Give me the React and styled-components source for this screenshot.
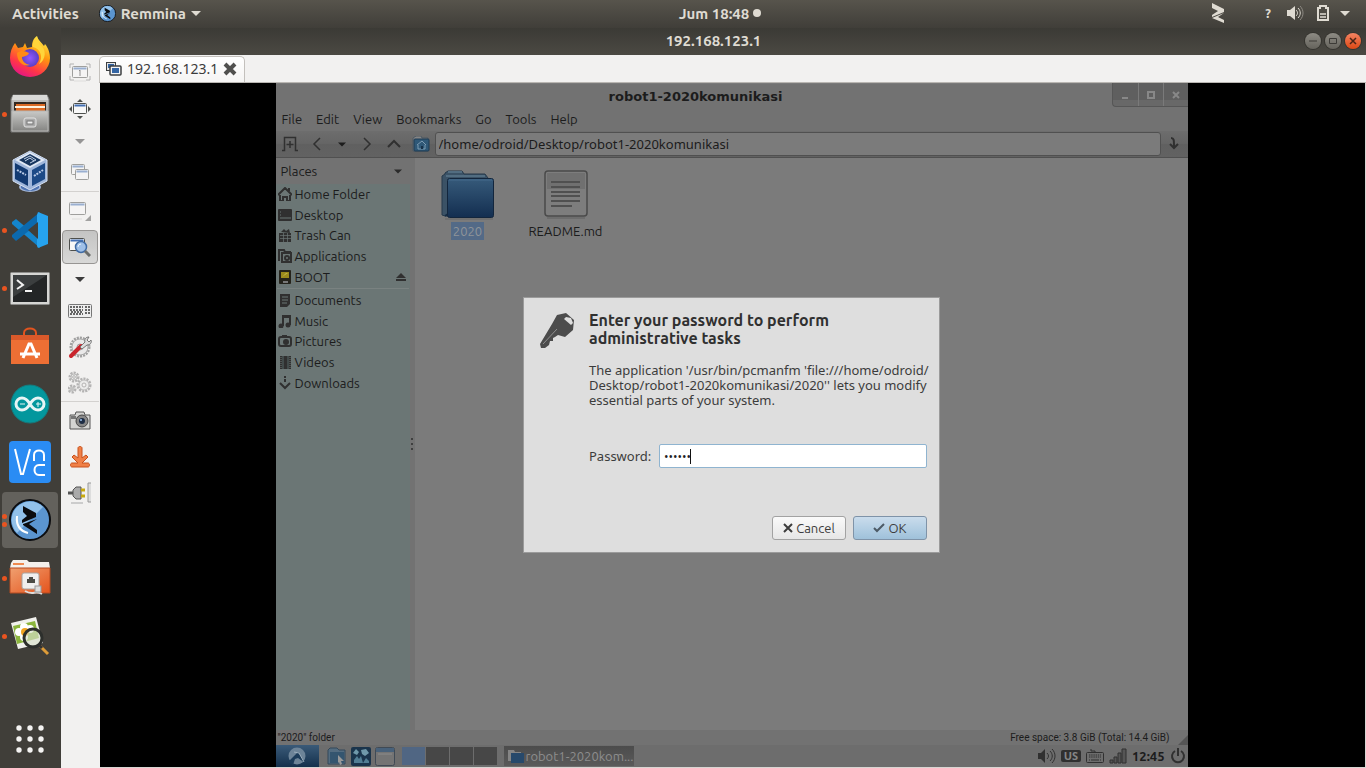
import React from "react";
import styled, { createGlobalStyle } from "styled-components";

const GlobalStyle = createGlobalStyle`
  * { box-sizing: border-box; }
  body { margin: 0; font-family: "Ubuntu", "Open Sans", "Noto Sans", sans-serif; font-size: 13px; overflow: hidden; }
  button, input { font: inherit; color: inherit; }
  button { border: 0; padding: 0; background: none; }
  h1, h2, p, ul { margin: 0; padding: 0; font-weight: inherit; }
  ul { list-style: none; }
  svg { display: block; flex: none; }
`;

const Screen = styled.div`
  display: flex;
  flex-direction: column;
  height: 100vh;
  background: #403e39;
`;

const TopBar = styled.header`
  display: grid;
  grid-template-columns: 1fr auto 1fr;
  align-items: center;
  height: 28px;
  flex: none;
  padding-bottom: 2px;
  color: #dfdbd2;
  font-size: 15px;
  font-weight: 600;
  background: linear-gradient(#57544c, #403e39);
`;
const TopLeft = styled.div`
  display: flex;
  align-items: center;
  padding-left: 12px;
  gap: 20px;
`;
const TopButton = styled.button`
  display: flex;
  align-items: center;
  gap: 5px;
  height: 26px;
`;
const Clock = styled.button`
  display: flex;
  align-items: center;
  gap: 4px;
  padding-left: 74px;
`;
const Tray = styled.div`
  display: flex;
  align-items: center;
  justify-content: flex-end;
  gap: 10px;
  padding-right: 16px;
`;
const TraySlot = styled.span`
  display: flex;
  justify-content: center;
  width: ${(p) => p.$w}px;
  margin-right: ${(p) => (p.$apart ? 24 : 0)}px;
  font-size: 13px;
`;

const Workspace = styled.div`
  display: flex;
  flex: 1;
  min-height: 0;
`;
const Dock = styled.nav`
  display: flex;
  flex-direction: column;
  gap: 2px;
  width: 61px;
  flex: none;
  padding: 0 3px 1px 2px;
  background: #403e39;
`;
const DockItem = styled.button`
  position: relative;
  display: flex;
  align-items: center;
  justify-content: center;
  width: 56px;
  height: 56px;
  flex: none;
  border-radius: 4px;
  background: ${(p) => (p.$active ? "#63615c" : "none")};
  margin-top: ${(p) => (p.$last ? "auto" : 0)};
`;
const Pips = styled.span`
  position: absolute;
  left: 0;
  top: 0;
  bottom: 0;
  display: flex;
  flex-direction: column;
  justify-content: center;
  gap: 3px;
  i { width: 5px; height: 5px; border-radius: 50%; background: #e95420; }
`;

const Window = styled.main`
  display: flex;
  flex-direction: column;
  flex: 1;
  min-width: 0;
  background: #f2f1f0;
`;
const TitleBar = styled.div`
  position: relative;
  display: flex;
  align-items: center;
  justify-content: center;
  height: 27px;
  flex: none;
  padding-bottom: 2px;
  color: #dfdbd2;
  background: linear-gradient(#3b3a35, #4b4943);
  h1 { font-size: 15px; font-weight: 600; }
`;
const WindowButtons = styled.div`
  position: absolute;
  right: 5px;
  top: 5px;
  display: flex;
  gap: 4px;
`;
const RoundButton = styled.button`
  display: grid;
  place-items: center;
  width: 16px;
  height: 16px;
  border-radius: 50%;
  box-shadow: 0 0 0 1px #35342f;
  background: ${(p) => (p.$close ? "linear-gradient(#f58463, #dd4814)" : "linear-gradient(#8d8b84, #65635c)")};
`;
const WindowBody = styled.div`
  display: flex;
  flex: 1;
  min-height: 0;
`;
const ToolColumn = styled.div`
  width: 38px;
  flex: none;
`;
const Tool = styled.button`
  display: grid;
  place-items: center;
  width: 36px;
  height: ${(p) => (p.$short ? 28 : 36)}px;
  margin-left: 1px;
  opacity: ${(p) => (p.$off ? 0.5 : 1)};
`;
const PressedTool = styled(Tool)`
  background: linear-gradient(#c4c4c3, #d8d8d7);
  border: 1px solid #979593;
  border-radius: 4px;
  height: 34px;
  margin: 1px 0 1px 1px;
`;
const ToolRule = styled.hr`
  height: 2px;
  margin: 0;
  border: 0;
  border-top: 1px solid #d3d1cf;
`;
const Pages = styled.div`
  display: flex;
  flex-direction: column;
  flex: 1;
  min-width: 0;
`;
const TabStrip = styled.div`
  display: flex;
  align-items: flex-end;
  height: 28px;
  flex: none;
  border-bottom: 1px solid #b9b6b2;
`;
const Tab = styled.div`
  display: flex;
  align-items: center;
  height: 26px;
  padding: 0 7px 2px 6px;
  border: 1px solid #c3c0bc;
  border-bottom: 0;
  border-radius: 5px 5px 0 0;
  background: linear-gradient(#fff, #f5f4f3);
  color: #3c3c3c;
  font-family: "Noto Sans", sans-serif;
  font-size: 14px;
  gap: 5px;
`;
const Viewport = styled.div`
  display: flex;
  justify-content: center;
  flex: 1;
  min-height: 0;
  margin-left: 1px;
  padding-right: 2px;
  background: #000;
  border: solid #d8d5d2;
  border-width: 0 1px 1px 0;
`;

const Remote = styled.section`
  position: relative;
  display: flex;
  flex-direction: column;
  height: 100%;
  aspect-ratio: 4 / 3;
  background: #727272;
  color: #1c1c1c;
`;
const RemoteTitle = styled.div`
  display: flex;
  align-items: center;
  justify-content: center;
  position: relative;
  height: 27px;
  flex: none;
  padding: 0 72px 2px 0;
  border-top: 1px solid #7a7a7a;
  font: 700 13px "DejaVu Sans", sans-serif;
  h2 { font-size: 13px; }
`;
const RemoteButtons = styled.div`
  position: absolute;
  right: 0;
  top: -1px;
  display: flex;
  height: 24px;
  border: 1px solid #565656;
  border-width: 0 0 1px 1px;
  border-radius: 0 0 0 4px;
  background: linear-gradient(#5f5f5f 75%, #686868 75%);
  button { width: 25px; display: grid; place-items: center; }
  button + button { border-left: 1px solid #7a7a7a; }
`;
const MenuBar = styled.div`
  display: flex;
  align-items: flex-start;
  gap: 14px;
  height: 21px;
  flex: none;
  padding-left: 6px;
  line-height: 19px;
`;
const NavBar = styled.div`
  display: flex;
  align-items: center;
  height: 27px;
  flex: none;
  padding-left: 1px;
  background: linear-gradient(#6d6d6d, #656565 50%, #606060 50%, #626262);
  border-bottom: 1px solid #505050;
`;
const NavButton = styled.button`
  display: grid;
  place-items: center;
  width: ${(p) => (p.$narrow ? 23 : 27)}px;
  height: 26px;
`;
const PathInput = styled.input`
  flex: 1;
  min-width: 0;
  height: 24px;
  padding: 0 3px;
  border: 1px solid #505050;
  border-radius: 3px;
  background: #7b7b7b;
  font-family: "Noto Sans", sans-serif;
  outline: 0;
`;
const Browser = styled.div`
  display: flex;
  flex: 1;
  min-height: 0;
`;
const SidePane = styled.div`
  display: flex;
  flex-direction: column;
  width: 134px;
  flex: none;
`;
const PlacesHeader = styled.button`
  display: flex;
  align-items: center;
  justify-content: space-between;
  height: 26px;
  flex: none;
  padding: 0 8px 0 5px;
`;
const Tree = styled.div`
  flex: 1;
  background: #6b7675;
`;
const PlaceList = styled.ul`
  display: flex;
  flex-direction: column;
  height: 103px;
`;
const Place = styled.li`
  display: flex;
  align-items: center;
  gap: 3px;
  flex: 1;
  min-height: 0;
  padding: 0 4px 0 2px;
  line-height: 20px;
  svg:last-child:not(:first-child) { margin-left: auto; }
`;
const TreeRule = styled.hr`
  height: 1px;
  margin: 1px;
  border: 0;
  background: #7a8281;
`;
const Splitter = styled.div`
  display: flex;
  flex-direction: column;
  align-items: center;
  justify-content: center;
  gap: 3px;
  width: 5px;
  flex: none;
  i { width: 2px; height: 2px; background: #3f3f3f; }
`;
const Files = styled.div`
  display: flex;
  flex: 1;
  align-items: flex-start;
  padding: 10px 4px;
  background: #7b7b7b;
`;
const FileCell = styled.div`
  display: flex;
  flex-direction: column;
  align-items: center;
  gap: 2px;
  width: 98px;
`;
const FileName = styled.span`
  padding: 0 2px;
  line-height: 18px;
  background: ${(p) => (p.$selected ? "#536a87" : "none")};
  color: ${(p) => (p.$selected ? "#8f9499" : "inherit")};
`;
const StatusBar = styled.div`
  display: flex;
  justify-content: space-between;
  height: 15px;
  flex: none;
  padding: 0 0 0 2px;
  font-family: Roboto, sans-serif;
  font-size: 10px;
  line-height: 15px;
  span:last-child { display: flex; align-items: flex-end; gap: 8px; }
`;
const TaskBar = styled.div`
  display: flex;
  align-items: center;
  height: 22px;
  flex: none;
  background: #6d6d6d;
`;
const StartButton = styled.button`
  display: grid;
  place-items: center;
  width: 43px;
  height: 22px;
  margin-right: 8px;
  background: linear-gradient(#3a5a78, #14304c);
`;
const Launchers = styled.div`
  display: flex;
  gap: 4px;
  margin-right: 7px;
`;
const Pager = styled.div`
  display: flex;
  gap: 1px;
  margin-right: 7px;
`;
const Desk = styled.button`
  width: 23px;
  height: 18px;
  background: ${(p) => (p.$current ? "#506683" : "#474747")};
`;
const TaskButton = styled.button`
  display: flex;
  align-items: center;
  gap: 2px;
  width: 130px;
  height: 20px;
  padding-left: 4px;
  background: linear-gradient(#4c4c4c, #5a5a5a);
  color: #8d8d8d;
  white-space: nowrap;
`;
const RemoteTray = styled.div`
  display: flex;
  align-items: center;
  gap: 5px;
  margin-left: auto;
  padding-right: 2px;
  font-weight: 600;
`;
const Layout = styled.span`
  width: 20px;
  border-radius: 2px;
  background: #303030;
  color: #858585;
  font: 700 11px/12px "Open Sans", sans-serif;
  text-align: center;
`;

const Shade = styled.div`
  position: absolute;
  inset: 0;
  display: grid;
  place-items: center;
`;
const Dialog = styled.form`
  display: grid;
  grid-template-columns: 38px 338px;
  column-gap: 13px;
  width: 417px;
  height: 256px;
  padding: 13px 12px 12px 14px;
  grid-template-rows: auto auto auto 1fr;
  border: 1px solid #9b9b9b;
  background: #dedede;
  color: #3c3c3c;
  white-space: nowrap;
`;
const DialogTitle = styled.h2`
  color: #303030;
  font-size: 16px;
  font-weight: 700;
  line-height: 18px;
`;
const DialogText = styled.p`
  grid-column: 2;
  margin-top: 14px;
  font-family: "Noto Sans", sans-serif;
  line-height: 15px;
`;
const PasswordRow = styled.div`
  grid-column: 2;
  display: flex;
  align-items: center;
  gap: 8px;
  height: 24px;
  margin-top: 36px;
  font-family: "Noto Sans", sans-serif;
  label { width: 62px; }
`;
const PasswordBox = styled.div`
  position: relative;
  flex: 1;
  height: 24px;
  input {
    width: 100%;
    height: 24px;
    padding: 0 4px;
    border: 1px solid #8fb4d0;
    border-radius: 2px;
    background: #fff;
    color: #222;
    font-family: "Open Sans", sans-serif;
    font-size: 12px;
    outline: 0;
  }
`;
const Caret = styled.i`
  position: absolute;
  left: 31px;
  top: 5px;
  width: 1px;
  height: 15px;
  background: #111;
`;
const Actions = styled.div`
  grid-column: 2;
  align-self: end;
  display: flex;
  justify-content: flex-end;
  gap: 7px;
`;
const Action = styled.button`
  display: flex;
  align-items: center;
  justify-content: center;
  gap: 3px;
  width: 74px;
  height: 24px;
  border: 1px solid ${(p) => (p.$main ? "#7f93a8" : "#a2a2a2")};
  border-radius: 3px;
  background: ${(p) => (p.$main ? "linear-gradient(#cadcec, #b4cfe4 50%, #9fc1da)" : "linear-gradient(#fafafa, #e6e6e6)")};
`;

/* Small shapes shared between bars */
const Down = ({ w = 10, h = 5, fill = "#dfdbd2" }) => (
  <svg width={w} height={h} viewBox="0 0 10 5"><path d="M0 0h10L5 5z" fill={fill} /></svg>
);
const RemminaLogo = ({ size }) => (
  <svg width={size} height={size} viewBox="0 0 42 42">
    <circle cx="21" cy="21" r="20" fill="#5b95d0" stroke="#0c0d10" strokeWidth="2" />
    <path d="M21 2.500A18.500 18.500 0 0 0 8 34L34 8A18.500 18.500 0 0 0 21 2.500z" fill="#92c1ea" />
    <path d="M14 7l13 7v4L13 24v-3l5-4-4-4z" fill="#0b0c0f" />
    <path d="M28 20l-8 5 8 6v4L14 26v-1z" fill="#0b0c0f" />
    <path d="M8 17c-1 9 3 15 11 17" fill="none" stroke="#fff" strokeWidth="2" />
  </svg>
);

/* Dock artwork */
const Firefox = () => (
  <svg width="42" height="42" viewBox="0 0 42 42">
    <defs>
      <linearGradient id="ffA" x1="0.8" y1="0" x2="0.3" y2="1"><stop offset="0" stopColor="#fff44f" /><stop offset=".4" stopColor="#ff980e" /><stop offset=".75" stopColor="#ff3647" /><stop offset="1" stopColor="#e31587" /></linearGradient>
      <radialGradient id="ffB"><stop offset="0" stopColor="#9059ff" /><stop offset="1" stopColor="#5b3fc4" /></radialGradient>
    </defs>
    <path d="M6 8l3 5 5-1 2-4 2 5 5-1c0-6 2-9 5-11 1 4 4 6 7 10l1-2c4 5 5 10 5 14a20 19 0 0 1-40 0C1 17 3 12 6 8z" fill="url(#ffA)" />
    <circle cx="21" cy="23" r="9" fill="url(#ffB)" />
    <path d="M8 18c4-3 8-2 12 0-1 3-4 3-7 4 0 4 3 7 8 8-8 2-13-4-13-12z" fill="#ff8a16" />
    <path d="M24 12c8 2 10 10 6 17 7-4 8-15 1-19-1-3-3-5-3-8-3 3-5 6-4 10z" fill="#ffd53a" />
  </svg>
);
const Cabinet = () => (
  <svg width="40" height="40" viewBox="0 0 40 40">
    <defs><linearGradient id="cab" x2="0" y2="1"><stop stopColor="#c9c9c7" /><stop offset="1" stopColor="#858583" /></linearGradient></defs>
    <path d="M3 1h34l2 4v33H1V5z" fill="url(#cab)" stroke="#777" />
    <path d="M3 1h34l1 5H2z" fill="#dadad8" />
    <path d="M4 8h32v9H4z" fill="#352920" />
    <path d="M6 10h29v7H6z" fill="#dc6a24" /><path d="M5 12h30v2H5z" fill="#fff1dd" />
    <path d="M2 17h36v20H2z" fill="url(#cab)" stroke="#b6b6b4" />
    <rect x="14" y="24" width="12" height="9" rx="2" fill="#aaa" stroke="#e4e4e4" /><rect x="17" y="27" width="6" height="3" fill="#eee" stroke="#777" />
  </svg>
);
const VBox = () => (
  <svg width="38" height="44" viewBox="0 0 38 44">
    <ellipse cx="19" cy="37" rx="11" ry="5" fill="#a4b8da" /><path d="M10 33h18v5c-4 4-14 4-18 0z" fill="#4f74b2" />
    <path d="M19 1l17 9v21L19 40 2 31V10z" fill="#9fb6da" stroke="#d5e0f1" />
    <path d="M19 2l15 8-15 8L4 10z" fill="#e1e9f5" /><path d="M19 4l11 6-11 6L8 10z" fill="#17365f" />
    <path d="M13 9l6-3 6 4-6 3M14 11l5-3 4 3" stroke="#c5d3e8" fill="none" strokeWidth="1" />
    <path d="M4 13l13 7v16L4 29z" fill="#123a72" /><path d="M34 13l-13 7v16l13-7z" fill="#1c4a87" />
    <path d="M6 20l9 5M23 26l9-6" stroke="#b9cae6" strokeWidth="2" strokeDasharray="2 1" />
  </svg>
);
const Code = () => (
  <svg width="38" height="38" viewBox="0 0 38 38">
    <path d="M1 11l4-3 24 20v9L1 13z" fill="#1485cc" /><path d="M1 26l4 4 24-19V1L1 24z" fill="#0b69ae" />
    <path d="M27 1l10 4v28l-10 4-1-2V4z" fill="#26a3ef" /><path d="M27 11v17L17 19z" fill="#403e39" />
  </svg>
);
const Terminal = () => (
  <svg width="40" height="33" viewBox="0 0 40 33">
    <rect x=".5" y=".5" width="39" height="32" rx="1" fill="#d6d6d4" stroke="#8c8c8a" /><rect x="3" y="3" width="34" height="27" fill="#232526" />
    <path d="M3 3h34L3 25z" fill="#3b3e3f" />
    <path d="M7 8l6 5-6 4" fill="none" stroke="#f2f2f2" strokeWidth="2" /><path d="M15 19h7" stroke="#f2f2f2" strokeWidth="2" />
  </svg>
);
const Software = () => (
  <svg width="40" height="40" viewBox="0 0 40 40">
    <path d="M14 11V7c0-6 12-6 12 0v4" fill="none" stroke="#e2541f" strokeWidth="2" />
    <path d="M1 9h38v29H1z" fill="#ee6f34" /><path d="M1 9h38v5H1z" fill="#d9592a" />
    <path d="M13 32l6-14h2l6 14M10 28h20" fill="none" stroke="#fff" strokeWidth="3" />
  </svg>
);
const Arduino = () => (
  <svg width="40" height="40" viewBox="0 0 40 40">
    <circle cx="20" cy="20" r="19" fill="#03979d" stroke="#157a7d" />
    <path d="M20 20c-3-5-5-6-8-6a6 6 0 0 0 0 12c3 0 5-1 8-6s5-6 8-6a6 6 0 0 1 0 12c-3 0-5-1-8-6z" fill="none" stroke="#e6f5f5" strokeWidth="3" />
    <path d="M10 20h5M26 20h5M28 18v5" stroke="#e6f5f5" strokeWidth="1" />
  </svg>
);
const Vnc = () => (
  <svg width="42" height="42" viewBox="0 0 42 42">
    <rect width="42" height="42" rx="4" fill="#2a8cf4" />
    <path d="M6 8l6 25 2 0 7-25M25 20v-6c0-6 10-6 10 0v6M36 24h-6c-6 0-6 10 0 10h6" fill="none" stroke="#fff" strokeWidth="2" />
  </svg>
);
const NetFolder = () => (
  <svg width="42" height="38" viewBox="0 0 42 38">
    <defs><linearGradient id="nf" x2="1" y2="1"><stop stopColor="#f0a070" /><stop offset="1" stopColor="#e4531c" /></linearGradient></defs>
    <path d="M2 4l2-3h14l2 2h20l1 6H1z" fill="#f4f0ec" /><path d="M4 5h11" stroke="#ee8a50" strokeWidth="2" />
    <path d="M1 9h40v25H1z" fill="url(#nf)" stroke="#b54a20" />
    <rect x="13" y="14" width="17" height="16" rx="2" fill="#f0efee" stroke="#a9a39e" />
    <path d="M18 24v-4h2v-2h4v2h2v4z" fill="#4b4b45" /><path d="M16 32c8 5 10-1 17 3" stroke="#ddd" fill="none" strokeWidth="2" /><rect x="26" y="27" width="6" height="6" fill="#ddd" stroke="#999" />
  </svg>
);
const ImageViewer = () => (
  <svg width="40" height="40" viewBox="0 0 40 40">
    <path d="M1 7l25-6 7 26-25 6z" fill="#f1f1ed" /><path d="M3 10l22-5 4 17-22 6z" fill="#8bb53d" />
    <g fill="#fff"><circle cx="14" cy="11" r="4" /><circle cx="9" cy="16" r="4" /><circle cx="14" cy="21" r="4" /><circle cx="20" cy="13" r="4" /></g><circle cx="15" cy="16" r="4" fill="#efa321" />
    <circle cx="23" cy="22" r="9" fill="#d9e0cb" fillOpacity=".65" stroke="#2d2f2c" strokeWidth="3" />
    <path d="M30 30l8 8" stroke="#dd9b38" strokeWidth="3" /><path d="M29 29l3 3" stroke="#333" strokeWidth="3" />
  </svg>
);
const AppGrid = () => (
  <svg width="28" height="28" viewBox="0 0 28 28" fill="#f4f3f2">
    {[3, 14, 25].map((y) => [3, 14, 25].map((x) => <circle key={`${x}-${y}`} cx={x} cy={y} r="2.700" />))}
  </svg>
);

const dock = [
  ["Firefox", <Firefox />, 0],
  ["Files", <Cabinet />, 1],
  ["VirtualBox", <VBox />, 0],
  ["Visual Studio Code", <Code />, 1],
  ["Terminal", <Terminal />, 1],
  ["Software", <Software />, 0],
  ["Arduino", <Arduino />, 0],
  ["VNC Viewer", <Vnc />, 0],
  ["Remmina", <RemminaLogo size={42} />, 2],
  ["Connections", <NetFolder />, 1],
  ["Image viewer", <ImageViewer />, 1],
];

/* Remmina toolbar artwork */
const MiniWindow = ({ x, y, w, h }) => (
  <g><rect x={x} y={y} width={w} height={h} rx="1" fill="#f8f8f8" stroke="#4e504d" /><path d={`M${x + 1} ${y + 2}h${w - 2}`} stroke="#4470b4" strokeWidth="2" /></g>
);
const Fit = () => (
  <svg width="22" height="20" viewBox="0 0 22 20">
    <path d="M1 5V1h4M17 1h4v4M1 13v4h4M21 13v4h-4" fill="none" stroke="#777" /><MiniWindow x={3.5} y={3.5} w={15} h={11} />
    <path d="M10 8l1-1v6" stroke="#333" fill="none" /><path d="M5 18h12" stroke="#ccc" />
  </svg>
);
const FullScreen = () => (
  <svg width="22" height="20" viewBox="0 0 22 20">
    <MiniWindow x={4.500} y={4.500} w={13} h={10} /><path d="M8 3l3-3 3 3zM8 17l3 3 3-3zM3 7L0 10l3 3zM19 7l3 3-3 3z" fill="#4e504d" />
  </svg>
);
const Duplicate = () => (
  <svg width="20" height="18" viewBox="0 0 20 18"><MiniWindow x={1.500} y={.5} w={13} h={10} /><MiniWindow x={5.500} y={5.500} w={13} h={10} /></svg>
);
const ResizeWin = () => (
  <svg width="22" height="20" viewBox="0 0 22 20"><MiniWindow x={.5} y={1.500} w={16} h={12} /><path d="M22 14v6h-6z" fill="#555" /><path d="M3 18h10" stroke="#ccc" /></svg>
);
const Scale = () => (
  <svg width="22" height="20" viewBox="0 0 22 20">
    <MiniWindow x={.5} y={1.500} w={15} h={12} /><circle cx="12" cy="10" r="5.500" fill="#9fc0e8" stroke="#3f6ba5" strokeWidth="1.500" /><path d="M16 14l5 5" stroke="#6b6d6b" strokeWidth="3" /><path d="M9 10a3 3 0 0 1 3-3" stroke="#e8f2fd" fill="none" />
  </svg>
);
const Keyboard = () => (
  <svg width="24" height="14" viewBox="0 0 24 14"><rect x=".5" y=".5" width="23" height="13" rx="1" fill="#eee" stroke="#777" /><path d="M2 3h13M2 6h13M3 8h12M2 10h13M17 3h5M17 6h5M17 9h5" stroke="#666" strokeWidth="2" strokeDasharray="2 1" /></svg>
);
const Gear = ({ cx, cy, r }) => (
  <g><circle cx={cx} cy={cy} r={r} fill="none" stroke="#777" strokeWidth="3" strokeDasharray="2 1" /><circle cx={cx} cy={cy} r={r - 1} fill="#e6e6e6" stroke="#888" /><circle cx={cx} cy={cy} r={r / 3} fill="#f2f1f0" stroke="#777" /></g>
);
const Prefs = () => (
  <svg width="24" height="24" viewBox="0 0 24 24"><g opacity=".65"><Gear cx={12} cy={12} r={9} /></g><path d="M3 21L13 11" stroke="#c9242c" strokeWidth="4" strokeLinecap="round" /><path d="M12 12l5-5c-1-3 1-5 4-5l-2 3 2 2 2-2c1 3-1 5-4 5l-5 4z" fill="#ddd" stroke="#777" /></svg>
);
const Gears = () => (
  <svg width="24" height="24" viewBox="0 0 24 24"><Gear cx={6} cy={6} r={4} /><Gear cx={16} cy={14} r={6} /><Gear cx={4} cy={18} r={3} /></svg>
);
const Camera = () => (
  <svg width="22" height="20" viewBox="0 0 22 20"><path d="M1 4h5l1-3h8l1 3h5v14H1z" fill="#d4d4d2" stroke="#555" /><path d="M2 5h5v3H2z" fill="#777" /><circle cx="13" cy="10" r="6" fill="#888" stroke="#444" /><circle cx="13" cy="10" r="3" fill="#1d2c44" /><circle cx="12" cy="9" r="1" fill="#9fc4f0" /></svg>
);
const Minimize = () => (
  <svg width="20" height="24" viewBox="0 0 20 24"><path d="M8 3c0-2 4-2 4 0v10l4-3 2 2-6 6h6c2 0 2 4 0 4H2c-2 0-2-4 0-4h6l-6-6 2-2 4 3z" fill="#f08047" stroke="#c8501c" /></svg>
);
const Plug = () => (
  <svg width="24" height="22" viewBox="0 0 24 22"><path d="M0 11h6" stroke="#555" strokeWidth="3" /><path d="M5 8l3-3h5v12H8l-3-3z" fill="#aaa" stroke="#555" /><path d="M13 8h4M13 14h4" stroke="#c7a910" strokeWidth="3" /><path d="M23 1h-3v19h3" fill="#ddd" stroke="#999" /><path d="M3 21h12" stroke="#ccc" strokeWidth="2" /></svg>
);

/* File manager artwork */
const ink = "#303030";
const Nav = ({ d, w = 3 }) => (
  <svg width="16" height="16" viewBox="0 0 16 16"><path d={d} fill="none" stroke={ink} strokeWidth={w} /></svg>
);
const placeArt = {
  home: <path d="M0 8l7-7 7 7M2 8v6h3v-4h4v4h3V8M11 1v3" fill="none" stroke={ink} strokeWidth="2" />,
  desktop: <g><rect y="1" width="14" height="12" rx="1" fill={ink} /><path d="M2 4h1M2 7h1M2 10h11" stroke="#6b7675" /></g>,
  trash: <g><path d="M1 5h12v9H1zM3 4l3-3 2 2 3-2 1 4z" fill={ink} /><path d="M2 7.500h11M2 10.500h11M5.500 5v9M9.500 5v9" stroke="#6b7675" strokeWidth=".7" /></g>,
  apps: <g><path d="M1 12V1h5l1 2h6M4 4h9v9H4z" fill="none" stroke={ink} strokeWidth="2" /><circle cx="9" cy="9" r="2" fill="none" stroke={ink} strokeWidth="2" /></g>,
  boot: <g><rect x="1" width="12" height="14" rx="1" fill="#25231b" /><path d="M3 2h8v6H3z" fill="#9b8a1c" /><path d="M4 7l4-4h2z" fill="#c2b647" /><path d="M5 11h5v2H5z" fill="#777" /></g>,
  docs: <g><path d="M2 1h10v10l-3 3H2z" fill={ink} /><path d="M4 4h6M4 7h6M4 10h5" stroke="#6b7675" /></g>,
  music: <g fill={ink}><path d="M4 1h9v10h-2V4H6v8H4z" /><circle cx="3" cy="12" r="2.500" /><circle cx="10" cy="11" r="2.500" /></g>,
  pics: <g><rect x="1" y="3" width="12" height="9" rx="2" fill="none" stroke={ink} strokeWidth="2" /><path d="M4 1h5v2H4z" fill={ink} /><circle cx="8" cy="8" r="3" fill={ink} /></g>,
  video: <g><path d="M2 1h11v13H2z" fill={ink} /><path d="M3 2v12M12 2v12" stroke="#6b7675" strokeDasharray="1 1" /><path d="M5 1v13M10 1v13" stroke="#566" /></g>,
  down: <g><path d="M2 7l5 5 5-5" fill="none" stroke={ink} strokeWidth="2" /><path d="M7 0v2M7 3v3" stroke={ink} strokeWidth="2" /></g>,
};
const PlaceIcon = ({ kind }) => <svg width="14" height="14" viewBox="0 0 14 14">{placeArt[kind]}</svg>;
const Eject = () => <svg width="10" height="8" viewBox="0 0 10 8" fill={ink}><path d="M5 0l5 5H0zM0 6h10v2H0z" /></svg>;

const FolderArt = () => (
  <svg width="56" height="52" viewBox="0 0 56 52">
    <defs><linearGradient id="fold" x2="0" y2="1"><stop stopColor="#365a7a" /><stop offset="1" stopColor="#132e50" /></linearGradient></defs>
    <path d="M2 47V8l3-2V5l3-2h14l2 3h21l3 4v38H5z" fill="#3b5266" stroke="#26394b" />
    <path d="M8 4h14M6 8h39" stroke="#526d81" strokeWidth="2" />
    <path d="M5 48L8 46" stroke="#142c45" strokeWidth="2" />
    <rect x="7.500" y="10.500" width="46" height="39" rx="2" fill="url(#fold)" stroke="#13263d" />
    <path d="M9 12h43" stroke="#456a8b" /><path d="M5 51h48" stroke="#555" opacity=".5" />
  </svg>
);
const PageArt = () => (
  <svg width="46" height="52" viewBox="0 0 46 52">
    <rect x="2" y="3" width="42" height="45" rx="3" fill="#7d7d7d" stroke="#4a4a4a" strokeWidth="1.500" /><path d="M4 5h38v16H4z" fill="#707070" />
    <path d="M8 14h29M8 19h29M8 24h29M8 28h29M8 33h29M8 38h21" stroke="#505050" strokeWidth="2" /><path d="M4 50h38" stroke="#606060" strokeWidth="1" />
  </svg>
);
const HomeFolder = () => (
  <svg width="18" height="16" viewBox="0 0 18 16"><path d="M1 15V2l3-2h5l1 2h6v13z" fill="#858585" stroke="#4d5862" /><rect x="2" y="3" width="15" height="12" rx="1" fill="#2f5877" stroke="#1f3b53" /><path d="M5 9l5-4 4 4M6 9v4h7V9" fill="none" stroke="#7d9cb3" /><path d="M9 10h2v3H9z" fill="#173149" /></svg>
);

const places = [["home", "Home Folder"], ["desktop", "Desktop"], ["trash", "Trash Can"], ["apps", "Applications"], ["boot", "BOOT"]];
const bookmarks = [["docs", "Documents"], ["music", "Music"], ["pics", "Pictures"], ["video", "Videos"], ["down", "Downloads"]];
const menus = ["File", "Edit", "View", "Bookmarks", "Go", "Tools", "Help"];

function RemoteDesktop() {
  return (
    <Remote>
      <RemoteTitle>
        <h2>robot1-2020komunikasi</h2>
        <RemoteButtons>
          <button aria-label="Minimize"><svg width="8" height="8"><path d="M1 7h6" stroke="#888" strokeWidth="2" /></svg></button>
          <button aria-label="Maximize"><svg width="8" height="8"><path d="M1 1h6v6H1z" fill="none" stroke="#888" strokeWidth="2" /></svg></button>
          <button aria-label="Close"><svg width="8" height="8"><path d="M1 1l6 6M7 1L1 7" stroke="#888" strokeWidth="2" /></svg></button>
        </RemoteButtons>
      </RemoteTitle>
      <MenuBar>{menus.map((m) => <button key={m}>{m}</button>)}</MenuBar>
      <NavBar>
        <NavButton aria-label="New tab"><Nav d="M0 14.500h2.500V1.500h11v13H16M8 5v7M4.500 8.500h7" w={1.5} /></NavButton>
        <NavButton aria-label="Back"><Nav d="M11 2L5 8l6 6" w={1.500} /></NavButton>
        <NavButton $narrow aria-label="History"><Down w={8} fill="#1c1c1c" /></NavButton>
        <NavButton aria-label="Forward"><Nav d="M5 2l6 6-6 6" w={1.500} /></NavButton>
        <NavButton aria-label="Up"><Nav d="M2 11l6-6 6 6" w={2} /></NavButton>
        <NavButton aria-label="Home"><HomeFolder /></NavButton>
        <PathInput aria-label="Location" defaultValue="/home/odroid/Desktop/robot1-2020komunikasi" />
        <NavButton aria-label="Go"><Nav d="M5 2c3 0 3 2 3 9M4 8l4 4 4-4" w={2} /></NavButton>
      </NavBar>
      <Browser>
        <SidePane>
          <PlacesHeader>Places <Down w={8} fill="#2a2a2a" /></PlacesHeader>
          <Tree>
            <PlaceList>
              {places.map(([k, label]) => <Place key={k}><PlaceIcon kind={k} />{label}{k === "boot" && <Eject />}</Place>)}
            </PlaceList>
            <TreeRule />
            <PlaceList>
              {bookmarks.map(([k, label]) => <Place key={k}><PlaceIcon kind={k} />{label}</Place>)}
            </PlaceList>
          </Tree>
        </SidePane>
        <Splitter><i /><i /><i /></Splitter>
        <Files>
          <FileCell><FolderArt /><FileName $selected>2020</FileName></FileCell>
          <FileCell><PageArt /><FileName>README.md</FileName></FileCell>
        </Files>
      </Browser>
      <StatusBar>
        <span>"2020" folder</span>
        <span>Free space: 3.8 GiB (Total: 14.4 GiB)<svg width="10" height="10"><path d="M10 0v10H0z" fill="#555" /></svg></span>
      </StatusBar>
      <TaskBar>
        <StartButton aria-label="Menu"><svg width="20" height="18" viewBox="0 0 20 18"><circle cx="10" cy="9" r="8.500" fill="#6d8498" /><path d="M1 15l10-10 7 11-7-5-3 1-2 6z" fill="#1c3c5a" /><path d="M7 5l5 1 5 9" stroke="#9badbb" fill="none" /></svg></StartButton>
        <Launchers>
          <svg width="20" height="19" viewBox="0 0 20 19"><path d="M1 17V3l2-2h7l2 2h6v14z" fill="#536c80" stroke="#35495a" /><path d="M3 5h14v11H3z" fill="#34556f" /><path d="M11 8l6 6-3 0 1 3-2 1-1-3-1 1z" fill="#999" /></svg>
          <svg width="20" height="19" viewBox="0 0 20 19"><rect width="20" height="19" rx="2" fill="#1a344c" /><path d="M2 6l3-4 3 3-2 3zM10 3l5-1 3 4-4 3-3-2z" fill="#6f98aa" /><path d="M3 13l3-4 2 3 2-3 2 7 3-5 3 3v2H3z" fill="#517d94" /></svg>
          <svg width="20" height="19" viewBox="0 0 20 19"><rect x=".5" y=".5" width="19" height="18" rx="2" fill="#747474" stroke="#404a55" /><path d="M1 3h18" stroke="#48617a" strokeWidth="4" /><path d="M3 7h14" stroke="#8b8b8b" /></svg>
        </Launchers>
        <Pager><Desk $current aria-label="Desktop 1" /><Desk aria-label="Desktop 2" /><Desk aria-label="Desktop 3" /><Desk aria-label="Desktop 4" /></Pager>
        <TaskButton><svg width="16" height="14" viewBox="0 0 16 14"><path d="M0 1h6l1 2h6v9H0z" fill="#858585" /><path d="M3 4h13v10H3z" fill="#27496b" /></svg>robot1-2020kom...</TaskButton>
        <RemoteTray>
          <svg width="18" height="16" viewBox="0 0 18 16"><path d="M0 5h3l4-4v14l-4-4H0z" fill={ink} /><path d="M9 5c2 2 2 4 0 6M12 3c3 3 3 7 0 10M14 1c4 4 4 10 0 14" fill="none" stroke={ink} strokeWidth="1" /></svg>
          <Layout>US</Layout>
          <svg width="18" height="14" viewBox="0 0 18 14"><rect x=".5" y="3.500" width="17" height="10" rx="1" fill="none" stroke={ink} /><path d="M3 6h12M3 8h12" stroke={ink} strokeWidth="1.200" strokeDasharray="1.400 .8" /><path d="M3 11h1M5 11h8M14 11h1" stroke={ink} /><path d="M9 4V2H5V0" stroke={ink} fill="none" /></svg>
          <svg width="18" height="16" viewBox="0 0 18 16"><path d="M1 15v-3h3v3zM5 15v-6h3v6zM9 15V5h3v10zM13 15V1h4v14z" fill="#555" stroke={ink} /></svg>
          <span>12:45</span>
          <svg width="16" height="16" viewBox="0 0 16 16"><path d="M5 3a6 6 0 1 0 6 0M8 0v8" fill="none" stroke={ink} strokeWidth="2" /></svg>
        </RemoteTray>
      </TaskBar>
      <Shade>
        <Dialog onSubmit={(e) => e.preventDefault()}>
          <svg width="38" height="38" viewBox="0 0 38 38">
            <path d="M14 13L19 4l9-2 8 7-1 10-8 7-7-2-3 2-2 1v3h-3l-1 4-4 3H3l-1-4z" fill="#4c4c4c" />
            <path d="M26 8l2-2 5 1 2 5-2 2z" fill="#dedede" /><path d="M5 33l14-15" stroke="#909090" strokeWidth="1" />
          </svg>
          <DialogTitle>Enter your password to perform<br />administrative tasks</DialogTitle>
          <DialogText>The application '/usr/bin/pcmanfm 'file:///home/odroid/<br />Desktop/robot1-2020komunikasi/2020'' lets you modify<br />essential parts of your system.</DialogText>
          <PasswordRow>
            <label htmlFor="pw">Password:</label>
            <PasswordBox><input id="pw" type="password" defaultValue="······" /><Caret /></PasswordBox>
          </PasswordRow>
          <Actions>
            <Action type="button"><svg width="10" height="10"><path d="M1 1l8 8M9 1L1 9" stroke="#3c3c3c" strokeWidth="2" /></svg>Cancel</Action>
            <Action $main><svg width="12" height="10"><path d="M1 5l3 3 7-7" fill="none" stroke="#4c5a66" strokeWidth="2" /></svg>OK</Action>
          </Actions>
        </Dialog>
      </Shade>
    </Remote>
  );
}

export default function App() {
  return (
    <Screen>
      <GlobalStyle />
      <TopBar>
        <TopLeft>
          <TopButton>Activities</TopButton>
          <TopButton><RemminaLogo size={17} />Remmina<Down /></TopButton>
        </TopLeft>
        <Clock>Jum 18:48 <svg width="8" height="8"><circle cx="4" cy="4" r="4" fill="#dfdbd2" /></svg></Clock>
        <Tray>
          <TraySlot $w={16} $apart><svg width="14" height="20" viewBox="0 0 14 20" fill="#dfdbd2"><path d="M1 0l12 6v3L1 14v-2l6-4-6-3zM13 10l-6 4 6 3v3L1 15z" /></svg></TraySlot>
          <TraySlot $w={16}>?</TraySlot>
          <TraySlot $w={20}><svg width="20" height="14" viewBox="0 0 20 14"><path d="M1 4h3l5-4v14l-5-4H1z" fill="#dfdbd2" /><path d="M10 4c2 2 2 4 0 6M12 2c3 3 3 7 0 10" stroke="#dfdbd2" strokeWidth="1" fill="none" /><path d="M14 0c4 4 4 10 0 14" stroke="#8d8a83" fill="none" strokeWidth="1" /></svg></TraySlot>
          <TraySlot $w={14}><svg width="12" height="16" viewBox="0 0 12 16"><path d="M1 3h2V1h6v2h2v12H1z" fill="none" stroke="#dfdbd2" strokeWidth="2" /><path d="M3 9h6M3 12h6" stroke="#dfdbd2" strokeWidth="1.500" /></svg></TraySlot>
          <Down />
        </Tray>
      </TopBar>
      <Workspace>
        <Dock>
          {dock.map(([name, art, n]) => (
            <DockItem key={name} aria-label={name} $active={n === 2}>
              {n > 0 && <Pips><i />{n > 1 && <i />}</Pips>}
              {art}
            </DockItem>
          ))}
          <DockItem $last aria-label="Show applications"><AppGrid /></DockItem>
        </Dock>
        <Window>
          <TitleBar>
            <h1>192.168.123.1</h1>
            <WindowButtons>
              <RoundButton aria-label="Minimize"><svg width="8" height="8"><path d="M0 4h8" stroke="#3c3b37" strokeWidth="1" /></svg></RoundButton>
              <RoundButton aria-label="Maximize"><svg width="8" height="8" viewBox="0 0 8 8"><path d="M.5 1.500h7v5h-7z" fill="none" stroke="#3c3b37" /></svg></RoundButton>
              <RoundButton $close aria-label="Close"><svg width="8" height="8"><path d="M1 1l6 6M7 1L1 7" stroke="#4a2416" strokeWidth="1.500" /></svg></RoundButton>
            </WindowButtons>
          </TitleBar>
          <WindowBody>
            <ToolColumn>
              <Tool $off aria-label="Fit window"><Fit /></Tool>
              <Tool aria-label="Fullscreen"><FullScreen /></Tool>
              <Tool $short $off aria-label="Fullscreen options"><Down fill="#3c3c3c" /></Tool>
              <Tool $off aria-label="Duplicate"><Duplicate /></Tool>
              <ToolRule />
              <Tool $off aria-label="Dynamic resolution"><ResizeWin /></Tool>
              <PressedTool aria-label="Scaled mode"><Scale /></PressedTool>
              <Tool $short aria-label="Scale options"><Down fill="#3c3c3c" /></Tool>
              <Tool aria-label="Grab keyboard"><Keyboard /></Tool>
              <Tool aria-label="Preferences"><Prefs /></Tool>
              <Tool $off aria-label="Tools"><Gears /></Tool>
              <ToolRule />
              <Tool aria-label="Screenshot"><Camera /></Tool>
              <Tool aria-label="Minimize window"><Minimize /></Tool>
              <Tool aria-label="Disconnect"><Plug /></Tool>
            </ToolColumn>
            <Pages>
              <TabStrip>
                <Tab>
                  <svg width="16" height="14" viewBox="0 0 16 14"><rect x=".5" y=".5" width="9" height="8" fill="#e5e5e5" stroke="#3c3f41" /><path d="M2 2h6v4H2z" fill="#3465a4" /><rect x="4" y="4" width="11" height="9" rx="1" fill="#f5f5f5" stroke="#3c3f41" strokeWidth="1.500" /><path d="M6 6h7v5H6z" fill="#3465a4" /></svg>
                  192.168.123.1
                  <svg width="14" height="14" viewBox="0 0 14 14"><path d="M2 2l10 10M12 2L2 12" stroke="#50504e" strokeWidth="4" /></svg>
                </Tab>
              </TabStrip>
              <Viewport><RemoteDesktop /></Viewport>
            </Pages>
          </WindowBody>
        </Window>
      </Workspace>
    </Screen>
  );
}
